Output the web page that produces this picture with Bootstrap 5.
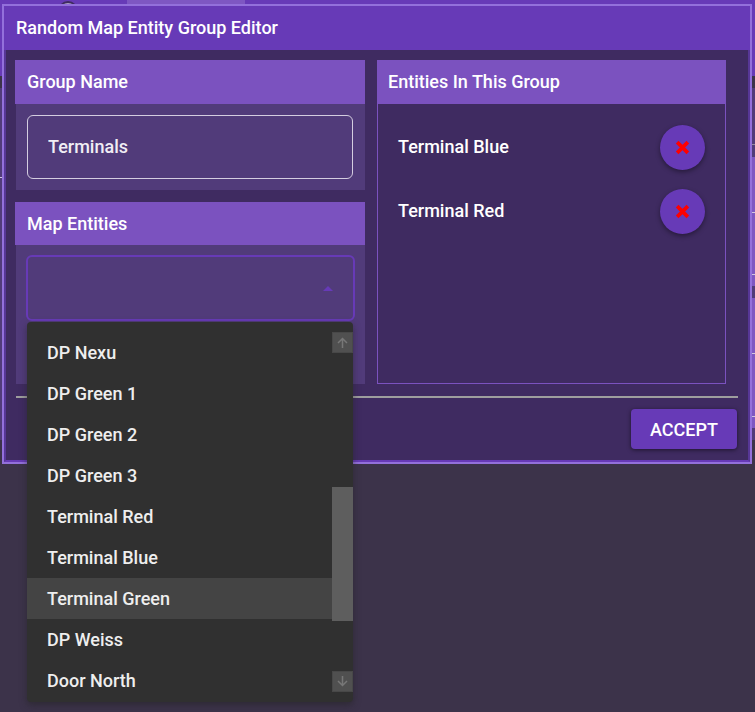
<!DOCTYPE html>
<html lang="en">
<head>
<meta charset="utf-8">
<meta name="viewport" content="width=device-width, initial-scale=1">
<title>Random Map Entity Group Editor</title>
<link rel="stylesheet" href="https://cdn.jsdelivr.net/npm/bootstrap@5.3.0/dist/css/bootstrap.min.css">
<style>
body{font-family:Roboto,sans-serif;font-size:18px;line-height:24px;font-weight:500;color:#fff;background:#3c334a;min-height:100vh;overflow:hidden}
.backdrop-page{position:absolute;top:0;left:0;right:0;height:440px;z-index:0;background:#513b7a}
.page-toolbar{height:76px;background:#673ab7}
.page-gap{height:12px;background:#3c334a}
.page-tab{position:absolute;top:0;left:127px;width:118px;height:20px;background:#7e57c2}
.page-knob{position:absolute;top:1px;left:58px;width:20px;height:20px;border:2px solid #3f2b61;border-radius:50%;background:#aaa0c0}
.page-side{position:absolute;right:0;width:10px;background:#7e57c2}
.side-upper{top:157px;height:129px}
.side-lower{top:298px;height:130px}
.page-rule{position:absolute;right:0;width:8px;height:1px;background:#d0c6df}
.rule-left{left:0;top:177px}
.rule-a{top:144px;background:#968ba0}
.rule-b{top:212px}
.rule-c{top:274px}
.rule-d{top:353px}
.rule-e{top:416px}
.editor{position:relative;z-index:1;margin:4px 3px 0 2px;border:2px solid #9370db;background:#3f2b61}
.editor-title{height:44px;padding:0 12px;font-weight:inherit;background:#673ab7;font-size:18px}
.editor-main{border:2px solid #573796;border-top:0;border-bottom-color:#673ab7;padding:10px 10px 11px 9px}
.columns{display:grid;grid-template-columns:350fr 349fr;gap:12px;margin-right:12px}
.sections{gap:12px}
.panel-title{height:44px;padding:0 12px;font-size:18px;font-weight:inherit;line-height:24px;margin:0;background:#7b52bf}
.pick-title{height:43px}
.panel-body{background:#513b7a;margin-left:1px;padding:11px 12px 11px 11px}
.entity-list{border:1px solid #7b52bf;border-top:0;padding:11px 20px}
.panel-title.for-list{padding:0 11px}
.name-box,.name-box:focus{height:64px;border:1px solid #d4cde0;border-radius:6px;background:transparent;color:#f0edf4;padding:0 20px 2px;font-size:18px;font-weight:inherit;box-shadow:none}
.pick-wrap{padding:10px 10px 0 10px;height:139px}
.pick,.pick:focus{height:66px;border:2px solid #673ab7;border-radius:6px;background:transparent url("data:image/svg+xml,%3Csvg xmlns='http://www.w3.org/2000/svg' viewBox='0 0 10 5'%3E%3Cpath d='M0 5 5 0l5 5z' fill='%23673ab7'/%3E%3C/svg%3E") no-repeat right 20px center/10px 5px;color:#fff;box-shadow:none}
.entity{height:64px}
.remove{width:45px;height:45px;border:0;border-radius:50%;background:#673ab7;box-shadow:0 2px 5px #0006}
.footer-rule{height:2px;background:#9e9e9e;margin:12px 0 11px 1px}
.accept,.accept:hover{height:40px;width:106px;border:0;border-radius:4px;background:#673ab7;color:#fff;font-size:18px;font-weight:500;padding:0;margin-right:1px;box-shadow:0 1px 4px #0008}
.options{position:absolute;z-index:3;top:316px;left:23px;width:326px;height:380px;padding:10px 0;border-radius:4px;background:#303030;box-shadow:0 3px 7px #2228;color:#eee}
.option{height:41px;padding:0 20px;line-height:41px}
.option.is-active{background:#444}
.scroller{position:absolute;top:10px;right:0;width:21px;bottom:10px;background:#303030}
.scroller button{width:21px;height:21px;padding:0;border:1px solid #484848;background:#505050;display:block}
.thumb{height:134px;margin:134px 0 50px;background:#5e5e5e}
svg{display:block;margin:auto}
</style>
</head>
<body>
<div class="backdrop-page" aria-hidden="true">
  <div class="page-toolbar"></div><div class="page-gap"></div>
  <div class="page-tab"></div><div class="page-knob"></div>
  <div class="page-side side-upper"></div><div class="page-side side-lower"></div>
  <div class="page-rule rule-left"></div><div class="page-rule rule-a"></div><div class="page-rule rule-b"></div><div class="page-rule rule-c"></div><div class="page-rule rule-d"></div><div class="page-rule rule-e"></div>
</div>
<main class="editor">
  <h1 class="editor-title d-flex align-items-center m-0">Random Map Entity Group Editor</h1>
  <div class="editor-main">
    <div class="columns">
      <div class="sections d-flex flex-column">
        <section>
          <h2 class="panel-title d-flex align-items-center"><label for="group-name">Group Name</label></h2>
          <div class="panel-body"><input id="group-name" class="form-control name-box" type="text" value="Terminals"></div>
        </section>
        <section>
          <h2 class="panel-title pick-title d-flex align-items-center"><label for="map-entity">Map Entities</label></h2>
          <div class="panel-body pick-wrap"><select id="map-entity" class="form-select pick"><option value="" selected></option></select></div>
        </section>
      </div>
      <section class="d-flex flex-column">
        <h2 class="panel-title for-list d-flex align-items-center">Entities In This Group</h2>
        <div class="entity-list flex-grow-1">
          <div class="entity d-flex align-items-center justify-content-between"><span>Terminal Blue</span>
            <button class="remove p-0" type="button" aria-label="Remove Terminal Blue"><svg width="15" height="15" viewBox="0 0 14 14"><path d="m2 2 10 10m0-10L2 12" stroke="red" stroke-width="3.400"/></svg></button></div>
          <div class="entity d-flex align-items-center justify-content-between"><span>Terminal Red</span>
            <button class="remove p-0" type="button" aria-label="Remove Terminal Red"><svg width="15" height="15" viewBox="0 0 14 14"><path d="m2 2 10 10m0-10L2 12" stroke="red" stroke-width="3.400"/></svg></button></div>
        </div>
      </section>
    </div>
    <div class="footer-rule"></div>
    <div class="d-flex justify-content-end"><button class="btn accept" type="button">ACCEPT</button></div>
  </div>
  <div class="options" role="listbox" aria-label="Map Entities">
    <div class="option" role="option">DP Nexu</div>
    <div class="option" role="option">DP Green 1</div>
    <div class="option" role="option">DP Green 2</div>
    <div class="option" role="option">DP Green 3</div>
    <div class="option" role="option">Terminal Red</div>
    <div class="option" role="option">Terminal Blue</div>
    <div class="option is-active" role="option" aria-selected="true">Terminal Green</div>
    <div class="option" role="option">DP Weiss</div>
    <div class="option" role="option">Door North</div>
    <div class="scroller">
      <button type="button" aria-label="Scroll up"><svg width="11" height="11" viewBox="0 0 11 11"><path d="M5.500 11V2M1 6l4.500-4.500L10 6" fill="none" stroke="#777" stroke-width="1.500"/></svg></button>
      <div class="thumb"></div>
      <button type="button" aria-label="Scroll down"><svg width="11" height="11" viewBox="0 0 11 11"><path d="M5.500 0v9M1 5l4.500 4.500L10 5" fill="none" stroke="#777" stroke-width="1.500"/></svg></button>
    </div>
  </div>
</main>
<script src="https://cdn.jsdelivr.net/npm/bootstrap@5.3.0/dist/js/bootstrap.bundle.min.js"></script>
</body>
</html>
